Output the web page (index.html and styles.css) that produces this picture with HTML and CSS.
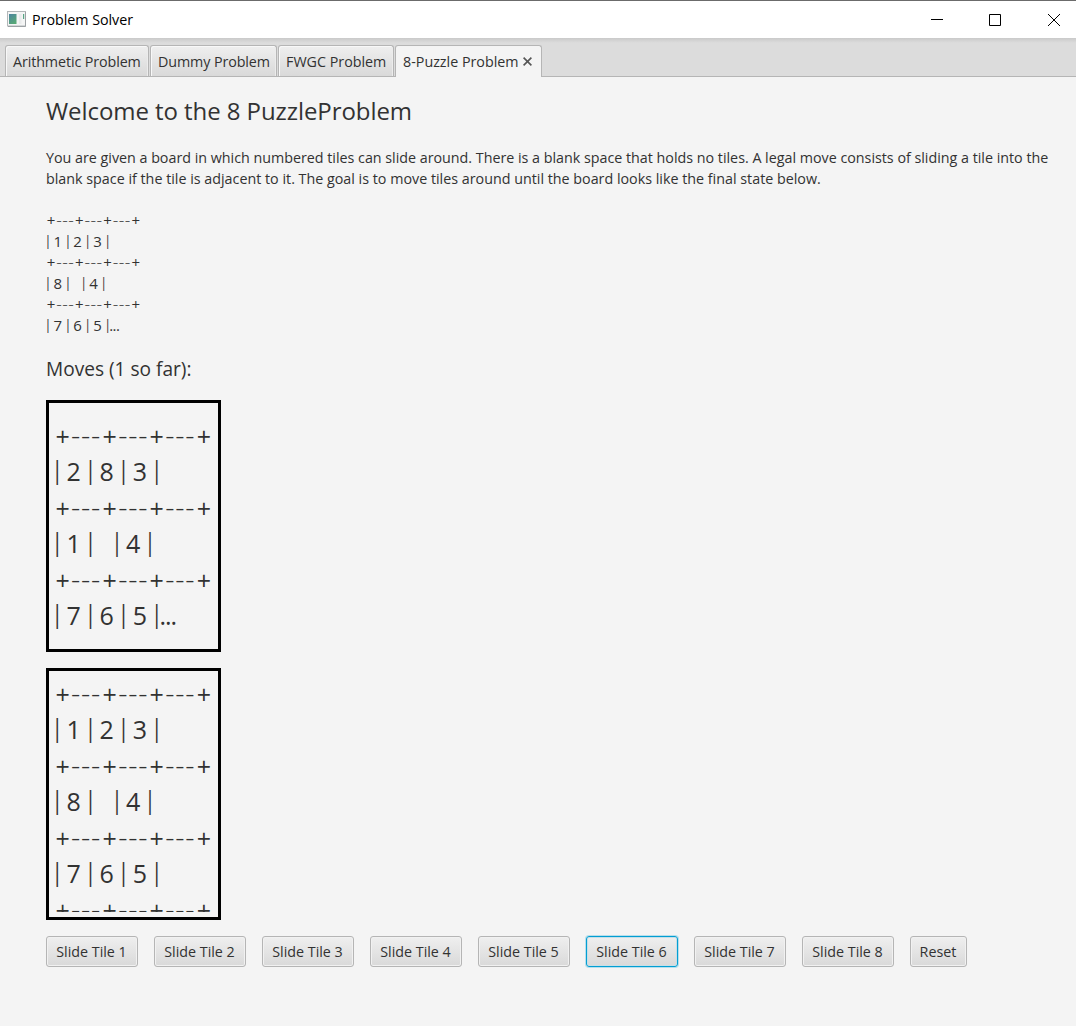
FILE: index.html
```html
<!DOCTYPE html>
<html lang="en">
<head>
<meta charset="utf-8">
<title>Problem Solver</title>
<link rel="stylesheet" href="styles.css">
</head>
<body>
<header class="titlebar">
  <svg class="app-icon" width="19" height="16" viewBox="0 0 19 16">
    <defs><linearGradient id="g" x1="0" y1="0" x2="0.6" y2="1"><stop offset="0" stop-color="#4b84a0"/><stop offset="1" stop-color="#57a876"/></linearGradient></defs>
    <rect x=".5" y=".5" width="18" height="14.500" fill="#f4f5f5" stroke="#b3b7b9"/>
    <path d="M1 15.500H18.500V1" fill="none" stroke="#9da2a5"/>
    <rect x="2" y="3" width="7.500" height="10" fill="url(#g)"/>
    <rect x="12" y="3" width="2.500" height="10" fill="#e9ebec"/>
    <rect x="16" y="3" width="1.200" height="5" fill="#59a585"/>
  </svg>
  <span class="window-title">Problem Solver</span>
  <svg class="window-controls" width="130" height="14" viewBox="0 0 130 14" fill="none" stroke="#000">
    <path d="M1 6.500H13M59.500 1.500H70.500V12.500H59.500ZM118 1L130 13M130 1L118 13"/>
  </svg>
</header>
<nav class="tabs">
  <div class="tab tab-arithmetic"><span>Arithmetic Problem</span></div>
  <div class="tab tab-dummy"><span>Dummy Problem</span></div>
  <div class="tab tab-fwgc"><span>FWGC Problem</span></div>
  <div class="tab tab-puzzle active"><span>8-Puzzle Problem</span>
    <svg width="9" height="9" viewBox="0 0 9 9" stroke="#555" stroke-width="1.600"><path d="M.6 .6L8.400 8.400M8.400 .6L.6 8.400"/></svg>
  </div>
</nav>
<main class="content">
  <h1>Welcome to the 8 PuzzleProblem</h1>
  <p class="intro"><span class="line-one">You are given a board in which numbered tiles can slide around. There is a blank space that holds no tiles. A legal move consists of sliding a tile into the</span><br><span class="line-two">blank space if the tile is adjacent to it. The goal is to move tiles around until the board looks like the final state below.</span></p>
  <div class="grid-text goal">
    <div><i>+</i><b>---</b><i>+</i><b>---</b><i>+</i><b>---</b><i>+</i></div>
    <div><s>|</s><u>1</u><s>|</s><u>2</u><s>|</s><u>3</u><s>|</s></div>
    <div><i>+</i><b>---</b><i>+</i><b>---</b><i>+</i><b>---</b><i>+</i></div>
    <div><s>|</s><u>8</u><s>|</s><u class="blank"></u><s>|</s><u>4</u><s>|</s></div>
    <div><i>+</i><b>---</b><i>+</i><b>---</b><i>+</i><b>---</b><i>+</i></div>
    <div><s>|</s><u>7</u><s>|</s><u>6</u><s>|</s><u>5</u><s>|</s><span class="dots">...</span></div>
  </div>
  <h2>Moves (1 so far):</h2>
  <section class="board board-current"><div class="grid-text">
    <div><i>+</i><b>---</b><i>+</i><b>---</b><i>+</i><b>---</b><i>+</i></div>
    <div><s>|</s><u>2</u><s>|</s><u>8</u><s>|</s><u>3</u><s>|</s></div>
    <div><i>+</i><b>---</b><i>+</i><b>---</b><i>+</i><b>---</b><i>+</i></div>
    <div><s>|</s><u>1</u><s>|</s><u class="blank"></u><s>|</s><u>4</u><s>|</s></div>
    <div><i>+</i><b>---</b><i>+</i><b>---</b><i>+</i><b>---</b><i>+</i></div>
    <div><s>|</s><u>7</u><s>|</s><u>6</u><s>|</s><u>5</u><s>|</s><span class="dots">...</span></div>
  </div></section>
  <section class="board"><div class="grid-text">
    <div><i>+</i><b>---</b><i>+</i><b>---</b><i>+</i><b>---</b><i>+</i></div>
    <div><s>|</s><u>1</u><s>|</s><u>2</u><s>|</s><u>3</u><s>|</s></div>
    <div><i>+</i><b>---</b><i>+</i><b>---</b><i>+</i><b>---</b><i>+</i></div>
    <div><s>|</s><u>8</u><s>|</s><u class="blank"></u><s>|</s><u>4</u><s>|</s></div>
    <div><i>+</i><b>---</b><i>+</i><b>---</b><i>+</i><b>---</b><i>+</i></div>
    <div><s>|</s><u>7</u><s>|</s><u>6</u><s>|</s><u>5</u><s>|</s></div>
    <div><i>+</i><b>---</b><i>+</i><b>---</b><i>+</i><b>---</b><i>+</i></div>
  </div></section>
  <div class="actions">
    <button>Slide Tile 1</button><button>Slide Tile 2</button><button>Slide Tile 3</button><button>Slide Tile 4</button><button>Slide Tile 5</button><button class="focused">Slide Tile 6</button><button>Slide Tile 7</button><button>Slide Tile 8</button><button class="reset">Reset</button>
  </div>
</main>
</body>
</html>
```
FILE: styles.css
```css
* { box-sizing: border-box; }
body {
  margin: 0;
  height: 1026px;
  overflow: hidden;
  background: #f4f4f4;
  color: #323232;
  font: 14.3px/21px "Open Sans", "Noto Sans", sans-serif;
}
.titlebar {
  display: flex;
  align-items: center;
  height: 38px;
  padding: 0 16px 0 7px;
  border-top: 1px solid #6b6b6b;
  background: #fff;
  color: #000;
}
.app-icon { margin-top: -1px; }
.window-title { margin-left: 6px; font-size: 14.3px; letter-spacing: -0.03px; }
.window-controls { margin-left: auto; }
.tabs {
  display: flex;
  align-items: flex-end;
  gap: 1px;
  height: 39px;
  padding-left: 5px;
  border-bottom: 1px solid #b5b5b5;
  background: linear-gradient(#cacaca, #dcdcdc 5px);
}
.tab {
  display: flex;
  align-items: center;
  height: 31px;
  padding: 1px 0 0 7px;
  border: 1px solid #b5b5b5;
  border-bottom: 0;
  border-radius: 3px 3px 0 0;
  background: linear-gradient(#efefef, #d9d9d9);
  box-shadow: inset 1px 1px #f8f8f8, inset -1px 0 #ececec;
  white-space: nowrap;
}
.tab-arithmetic { width: 144px; letter-spacing: -0.1px; }
.tab-dummy { width: 127px; letter-spacing: -0.1px; }
.tab-fwgc { width: 116px; }
.tab-puzzle { width: 147px; }
.tab svg { margin-left: 4px; }
.tab.active { height: 32px; margin-bottom: -1px; padding-bottom: 2px; background: #f4f4f4; box-shadow: none; }
.content { padding: 17px 0 0 46px; }
h1 { margin: 0; font-size: 24px; font-weight: 400; line-height: 34px; letter-spacing: -0.07px; }
.intro { margin: 19px 0 21px; white-space: nowrap; }
.line-one { letter-spacing: -0.01px; }
.grid-text { white-space: nowrap; }
.grid-text > div { height: 21px; line-height: 21px; }
.grid-text i, .grid-text b, .grid-text s, .grid-text u {
  display: inline-block;
  font-style: normal;
  font-weight: 400;
  text-decoration: none;
  text-align: center;
}
.grid-text i { width: 0.684em; }
.grid-text b {
  width: 1.0435em;
  font-size: 1.15em;
  font-weight: 300;
  line-height: 1.2;
  letter-spacing: 0.026em;
}
.grid-text s {
  width: 0.2078em;
  font-family: Roboto, sans-serif;
  font-size: 1.15em;
  font-weight: 300;
  line-height: 1;
}
.grid-text u { width: 1.087em; }
.grid-text .blank { width: 0.822em; }
.dots { letter-spacing: -0.04em; }
.goal { font-size: 15px; }
h2 { margin: 20px 0 18px; font-size: 19.1px; font-weight: 400; line-height: 26px; }
.board {
  width: 175px;
  height: 252px;
  margin-bottom: 16px;
  padding: 5px;
  border: 3px solid #000;
}
.board .grid-text { height: 236px; overflow: hidden; font-size: 25px; }
.board .grid-text > div { height: 36px; line-height: 35px; }
.board-current .grid-text { padding-top: 10px; }
.actions { display: flex; gap: 16px; }
button {
  width: 92px;
  height: 31px;
  padding: 0 1px 0 0;
  border: 1px solid #b5b5b5;
  border-radius: 3px;
  background: linear-gradient(#efefef, #d9d9d9);
  box-shadow: inset 0 0 0 1px #f1f1f1;
  color: #323232;
  font: inherit;
}
.focused { border-color: #039ed3; box-shadow: 0 0 0 1px #b7dfec, inset 0 0 0 1px #c7dfe7; }
.reset { width: 57px; }
```
